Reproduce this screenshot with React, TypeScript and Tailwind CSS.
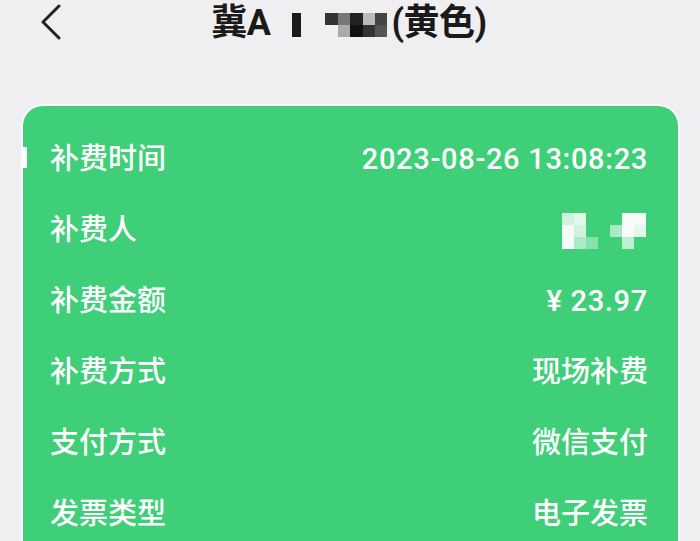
import { ReactNode } from 'react';

const ROWS: { label: string; value: ReactNode }[] = [
    { label: '补费时间', value: <span className="tracking-[0.7px]">2023-08-26 13:08:23</span> },
    {
        label: '补费人',
        value: (
            <span className="flex items-center gap-[12px] opacity-95 mr-[2px]">
                <span className="grid grid-cols-3 grid-rows-3 w-[36px] h-[36px]">
                    <span className="bg-white/80" />
                    <span className="bg-white/90" />
                    <span />
                    <span className="bg-white" />
                    <span className="bg-white/80" />
                    <span />
                    <span className="bg-white" />
                    <span className="bg-white/60" />
                    <span className="bg-white/40" />
                </span>
                <span className="grid grid-cols-3 grid-rows-3 w-[36px] h-[36px]">
                    <span />
                    <span className="bg-white" />
                    <span className="bg-white" />
                    <span className="bg-white/60" />
                    <span className="bg-white" />
                    <span className="bg-white/90" />
                    <span />
                    <span className="bg-white/70" />
                    <span />
                </span>
            </span>
        ),
    },
    { label: '补费金额', value: <span className="tracking-[0.7px]">¥ 23.97</span> },
    { label: '补费方式', value: '现场补费' },
    { label: '支付方式', value: '微信支付' },
    { label: '发票类型', value: '电子发票' },
];

export default function App() {
    return (
        <div
            className="w-[700px] h-[541px] overflow-hidden bg-[#efeff1] text-white"
            style={{ fontFamily: "Roboto, 'Noto Sans CJK SC', sans-serif" }}
        >
            {/* ── Header ── */}
            <div className="relative h-[46px] flex items-center justify-center text-[#1a1a1a]">
                <svg className="absolute left-[38px] top-[4px] w-[26px] h-[36px]" viewBox="0 0 26 36" fill="none">
                    <path d="M21 2 L5 18 L21 34" stroke="#222" strokeWidth="3" strokeLinecap="round" strokeLinejoin="round" />
                </svg>
                <h1 className="text-[36px] font-bold flex items-center leading-none tracking-[-0.5px] ml-[-2px]">
                    <span>冀A</span>
                    <span className="inline-block w-[9px] h-[24px] bg-[#1a1a1a] ml-[22px] mr-[24px] mt-[4px]" />
                    <span className="grid grid-cols-5 grid-rows-2 w-[62px] h-[24px] mt-[4px]">
                        <span className="bg-[#333]" />
                        <span className="bg-[#777]" />
                        <span className="bg-[#222]" />
                        <span className="bg-[#bbb]" />
                        <span className="bg-[#444]" />
                        <span />
                        <span className="bg-[#aaa]" />
                        <span className="bg-[#111]" />
                        <span className="bg-[#333]" />
                        <span className="bg-[#555]" />
                    </span>
                    <span className="ml-[4px]">(黄色)</span>
                </h1>
            </div>

            {/* ── Detail card ── */}
            <div className="relative mt-[58px] ml-[21px] w-[659px] rounded-t-[22px] border-[2px] border-b-0 border-white bg-[#3ecf78] pt-[18px] pl-[27px] pr-[30px] h-[460px]">
                <span className="absolute left-[-2px] top-[41px] w-[6px] h-[21px] bg-white" />
                {ROWS.map(r => (
                    <div key={r.label} className="h-[71px] flex items-center justify-between text-[29px] font-medium">
                        <span>{r.label}</span>
                        <span>{r.value}</span>
                    </div>
                ))}
            </div>
        </div>
    );
}
